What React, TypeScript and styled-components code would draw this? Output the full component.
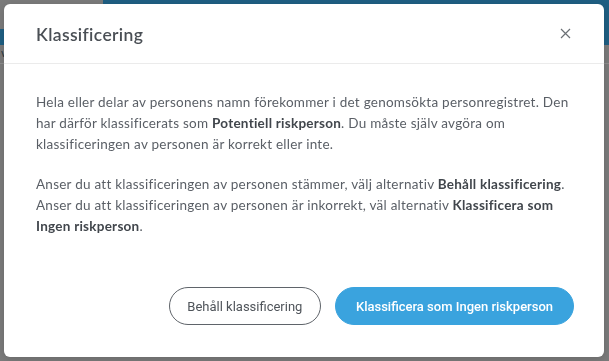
import React from "react";
import styled, { createGlobalStyle } from "styled-components";

const GlobalStyle = createGlobalStyle`
  html, body {
    margin: 0;
    padding: 0;
    width: 609px;
    height: 361px;
    overflow: hidden;
    background: #7b7b7b;
  }
  * {
    box-sizing: border-box;
  }
`;

const Page = styled.div`
  width: 609px;
  height: 361px;
  display: flex;
  flex-direction: column;
  background: #7b7b7b;
`;

const TopBar = styled.div`
  height: 45px;
  display: flex;
  background: #1f5f83;
`;

const LogoArea = styled.div`
  width: 103px;
  height: 29px;
  background: #7b7b7b;
`;

const SubBar = styled.div`
  height: 19px;
  border-bottom: 1px solid #8e8e8e;
  padding-left: 1px;
  font: 12px "Lato", sans-serif;
  color: #2b3a44;
`;

const Overlay = styled.div`
  position: fixed;
  inset: 0;
  padding: 4px 5px 4px 4px;
  display: flex;
`;

const Modal = styled.div`
  flex: 1;
  background: #ffffff;
  border-radius: 6px;
  display: flex;
  flex-direction: column;
  box-shadow: 0 2px 8px rgba(0, 0, 0, 0.15);
`;

const Header = styled.div`
  height: 60px;
  padding: 0 32px;
  display: flex;
  align-items: center;
  justify-content: space-between;
  border-bottom: 1px solid #ebebeb;
`;

const Title = styled.h2`
  margin: 0;
  padding-top: 1px;
  font: 600 17.5px "Lato", sans-serif;
  color: #4a4f55;
  letter-spacing: 0.35px;
`;

const CloseButton = styled.button`
  width: 14px;
  height: 14px;
  padding: 0;
  border: none;
  background: none;
  display: flex;
  align-items: center;
  justify-content: center;
  cursor: pointer;
  color: #6b7075;
`;

const Body = styled.div`
  flex: 1;
  padding: 28px 32px 0 32px;
`;

const Paragraph = styled.p`
  margin: 0 0 19px 0;
  font: 13.5px/21px "Lato", sans-serif;
  letter-spacing: 0.25px;
  color: #5a5f66;
`;

const Strong = styled.b`
  font-weight: 700;
  color: #41464c;
`;

const Footer = styled.div`
  display: flex;
  justify-content: flex-end;
  gap: 14px;
  padding: 0 30px 32px 32px;
`;

const Button = styled.button<{ $primary?: boolean }>`
  height: 38px;
  padding: 0 ${(p) => (p.$primary ? "20px" : "17.5px")};
  border-radius: 19px;
  font: ${(p) => (p.$primary ? 500 : 400)} 13px "Roboto", sans-serif;
  cursor: pointer;
  border: 1px solid ${(p) => (p.$primary ? "#3aa3de" : "#5f646a")};
  background: ${(p) => (p.$primary ? "#3aa3de" : "#ffffff")};
  color: ${(p) => (p.$primary ? "#ffffff" : "#4f545a")};
`;

const App = () => {
  return (
    <>
      <GlobalStyle />
      <Page>
        <TopBar>
          <LogoArea />
        </TopBar>
        <SubBar>w</SubBar>
      </Page>
      <Overlay>
        <Modal>
          <Header>
            <Title>Klassificering</Title>
            <CloseButton aria-label="Stäng">
              <svg width="11" height="11" viewBox="0 0 11 11">
                <path
                  d="M1 1 L10 10 M10 1 L1 10"
                  stroke="currentColor"
                  strokeWidth="1.2"
                  fill="none"
                />
              </svg>
            </CloseButton>
          </Header>
          <Body>
            <Paragraph>
              Hela eller delar av personens namn förekommer i det genomsökta
              personregistret. Den har därför klassificerats som{" "}
              <Strong>Potentiell riskperson</Strong>. Du måste själv avgöra om
              klassificeringen av personen är korrekt eller inte.
            </Paragraph>
            <Paragraph>
              Anser du att klassificeringen av personen stämmer, välj
              alternativ <Strong>Behåll klassificering</Strong>.
              <br />
              Anser du att klassificeringen av personen är inkorrekt, väl
              alternativ <Strong>Klassificera som Ingen riskperson</Strong>.
            </Paragraph>
          </Body>
          <Footer>
            <Button>Behåll klassificering</Button>
            <Button $primary>Klassificera som Ingen riskperson</Button>
          </Footer>
        </Modal>
      </Overlay>
    </>
  );
};

export default App;
